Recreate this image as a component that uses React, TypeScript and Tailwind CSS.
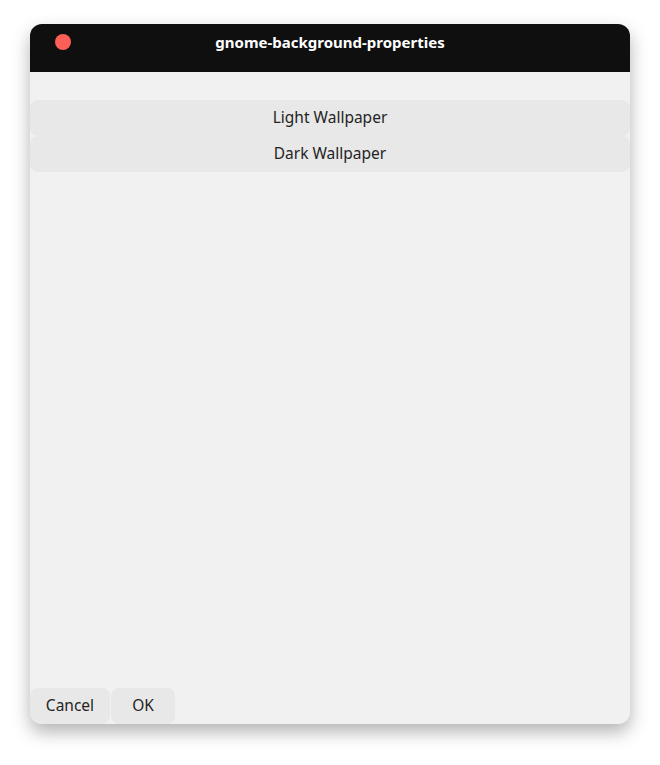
import { useState } from 'react';

const font = { fontFamily: '"Noto Sans", "Open Sans", sans-serif' };

export default function App() {
  const [choice, setChoice] = useState<string | null>(null);

  const options = ['Light Wallpaper', 'Dark Wallpaper'];

  return (
    <div className="min-h-screen bg-white pl-[30px] pt-6" style={font}>
      <div className="flex h-[700px] w-[600px] flex-col overflow-hidden rounded-xl bg-[#f1f1f1] shadow-[0_8px_18px_rgba(0,0,0,0.3)]">
        {/* Title bar */}
        <header className="relative flex h-12 shrink-0 items-start justify-center bg-[#0f0f0f] pt-[8px]">
          <span className="absolute left-[25px] top-[10px] h-4 w-4 rounded-full bg-[#fe5f57]" />
          <h1 className="text-[15px] font-bold leading-5 text-white">gnome-background-properties</h1>
        </header>

        {/* Options */}
        <div className="flex-1 pt-7">
          {options.map((o) => (
            <button
              key={o}
              onClick={() => setChoice(o)}
              className={`flex h-9 w-full items-center justify-center rounded-lg text-[15.5px] text-[#242424] ${
                choice === o ? 'bg-[#dcdcdc]' : 'bg-[#e8e8e8]'
              }`}
            >
              {o}
            </button>
          ))}
        </div>

        {/* Footer */}
        <div className="flex h-9 shrink-0 gap-px">
          <button className="w-20 rounded-lg bg-[#e8e8e8] text-[15.5px] text-[#242424]">Cancel</button>
          <button className="w-16 rounded-lg bg-[#e8e8e8] text-[15.5px] text-[#242424]">OK</button>
        </div>
      </div>
    </div>
  );
}
